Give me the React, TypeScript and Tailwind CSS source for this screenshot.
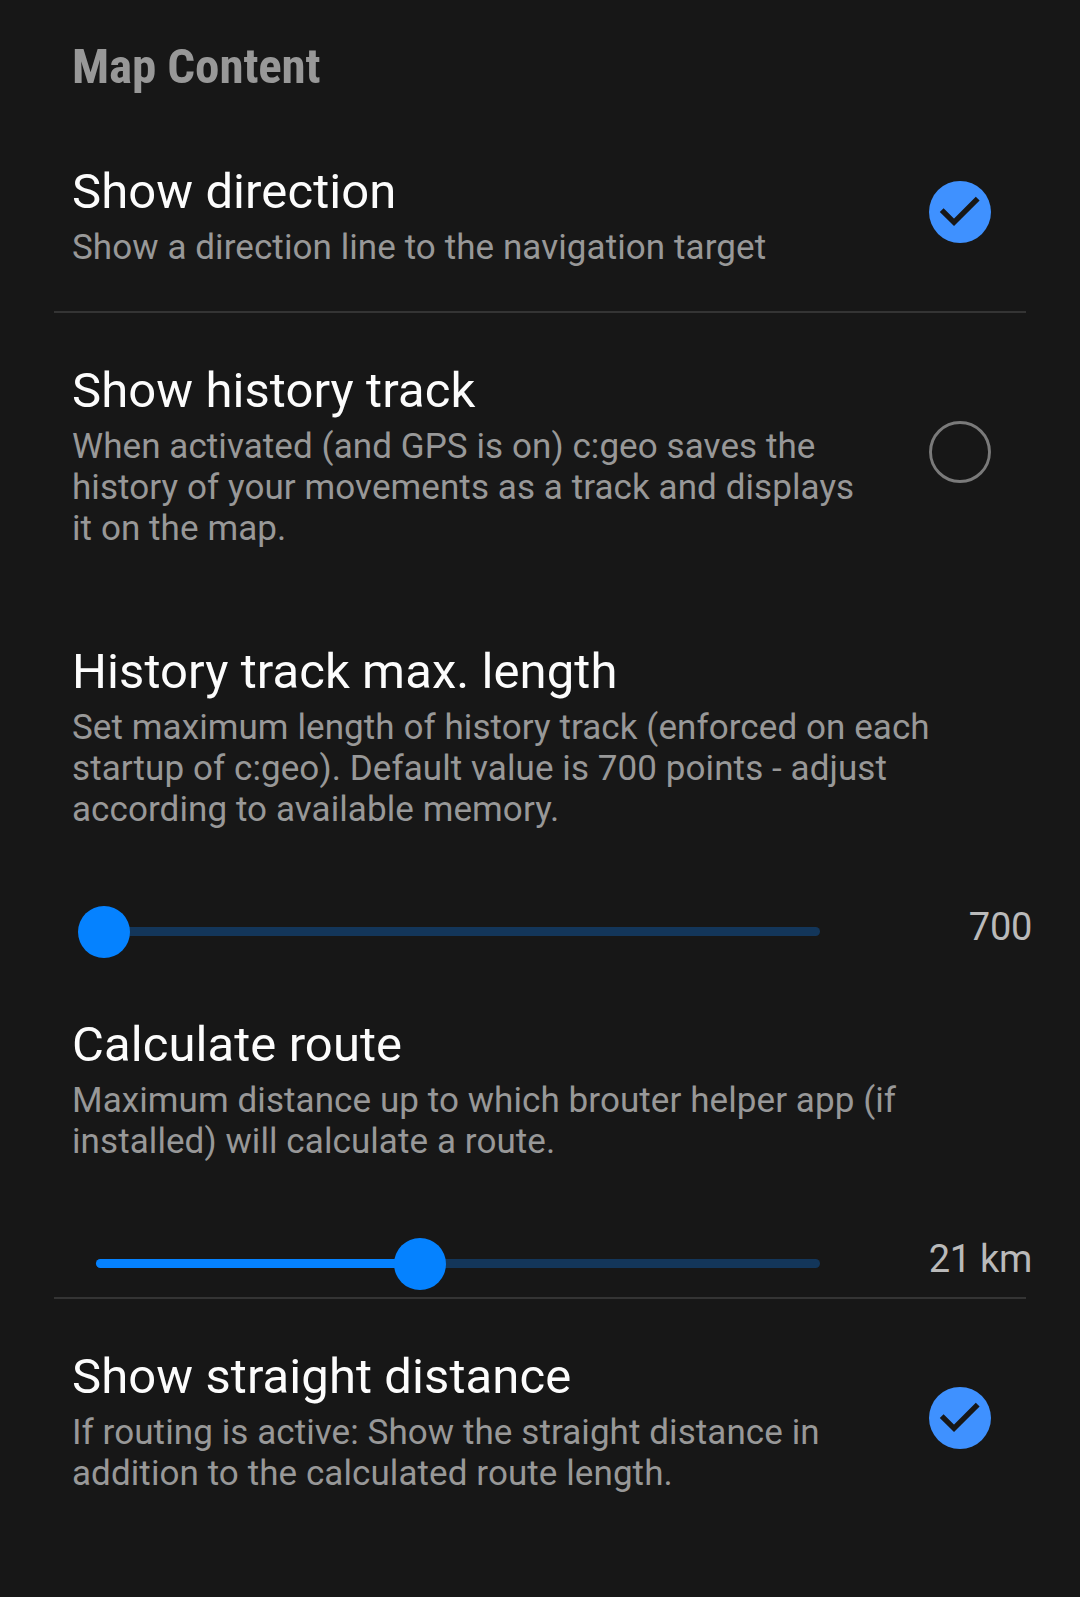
import React from "react";

function Check({ on }: { on: boolean }) {
  return (
    <svg className="block h-[62px] w-[62px] shrink-0" viewBox="0 0 62 62">
      {on ? (
        <>
          <circle cx="31" cy="31" r="31" fill="#3f91ff" />
          <path d="M12.7 29.2 L25 41.3 L48.7 17.6" fill="none" stroke="#171717" strokeWidth="5.4" />
        </>
      ) : (
        <circle cx="31" cy="31" r="29.5" fill="none" stroke="#7a7a7a" strokeWidth="2.9" />
      )}
    </svg>
  );
}

function Texts({ title, lines }: { title: string; lines: string[] }) {
  return (
    <div className="whitespace-nowrap">
      <h2 className="text-[49px] leading-[57px] tracking-[0.08px] text-[#fcfcfc]">{title}</h2>
      <p className="mt-[7px] text-[35px] leading-[41px] tracking-[0.08px] text-[#989898]">
        {lines.map((l) => (
          <span key={l} className="block">{l}</span>
        ))}
      </p>
    </div>
  );
}

function Slider({ value, label }: { value: number; label: string }) {
  return (
    <div className="mb-px flex h-[51px] items-center justify-between pr-12 pl-24">
      <div className="relative h-[9px] w-[724px] rounded-full bg-[#13365a]">
        <div className="h-full rounded-full bg-[#0582ff]" style={{ width: value }} />
        <div className="absolute top-[-21px] h-[51.5px] w-[51.5px] rounded-full bg-[#0582ff]" style={{ left: value - 26 }} />
      </div>
      <span className="-mt-[9px] text-[38px] leading-[44px] tracking-[-0.3px] text-[#bababa]">{label}</span>
    </div>
  );
}

export default function App() {
  return (
    <main className="flex h-[1597px] w-[1080px] flex-col overflow-hidden bg-[#171717] font-[Roboto,sans-serif]">
      <h1 className="h-[163px] pt-[38px] pl-[72px] font-['Roboto_Condensed',Roboto,sans-serif] text-[49px] leading-[57px] font-bold tracking-[-0.12px] text-[#989898] [font-stretch:75%]">Map Content</h1>
      <section className="flex h-[148px] justify-between pr-[89px] pl-[72px]">
        <Texts title="Show direction" lines={["Show a direction line to the navigation target"]} />
        <div className="pt-[18px]"><Check on /></div>
      </section>
      <hr className="mx-[54px] h-[2px] border-0 bg-[#343434]" />
      <section className="flex h-[281px] justify-between pt-[49px] pr-[89px] pl-[72px]">
        <Texts title="Show history track" lines={["When activated (and GPS is on) c:geo saves the", "history of your movements as a track and displays", "it on the map."]} />
        <div className="pt-[59px]"><Check on={false} /></div>
      </section>
      <section className="h-[312px] pt-[49px] pl-[72px]">
        <Texts title="History track max. length" lines={["Set maximum length of history track (enforced on each", "startup of c:geo). Default value is 700 points - adjust", "according to available memory."]} />
      </section>
      <Slider value={8} label="700" />
      <section className="h-[280px] pt-[58px] pl-[72px]">
        <Texts title="Calculate route" lines={["Maximum distance up to which brouter helper app (if", "installed) will calculate a route."]} />
      </section>
      <Slider value={324} label="21 km" />
      <hr className="mx-[54px] mt-[7px] h-[2px] border-0 bg-[#343434]" />
      <section className="flex justify-between pt-[49px] pr-[89px] pl-[72px]">
        <Texts title="Show straight distance" lines={["If routing is active: Show the straight distance in", "addition to the calculated route length."]} />
        <div className="pt-[39px]"><Check on /></div>
      </section>
    </main>
  );
}
